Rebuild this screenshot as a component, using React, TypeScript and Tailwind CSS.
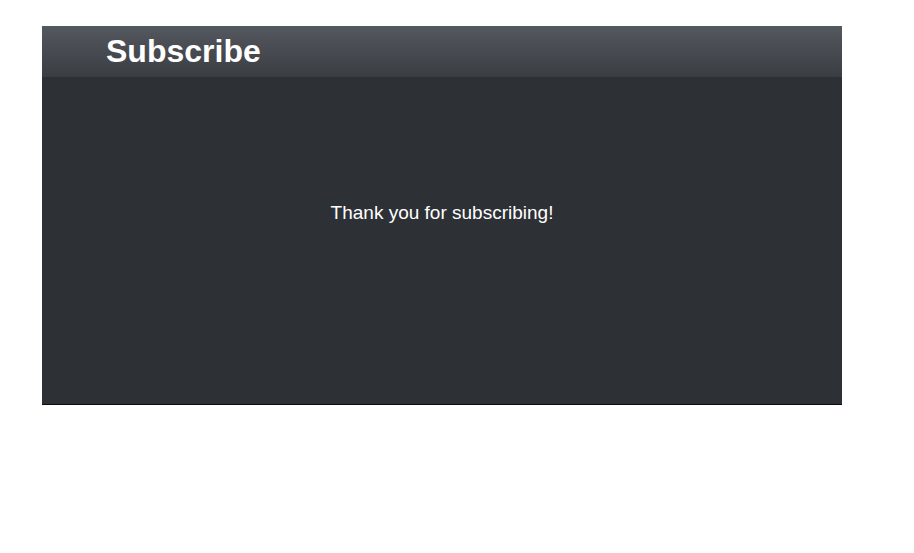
import React from "react";

const App = () => {
  return (
    <div className="min-h-screen bg-white pt-[26px] pl-[42px] font-['Liberation_Sans',Arial,sans-serif]">
      <section className="w-[800px] bg-[#2d3035] border-b border-[#0b0c0d]">
        <header className="h-[51px] flex items-center pl-16 pb-[2px] bg-gradient-to-b from-[#54585f] to-[#3a3d42]">
          <h1 className="text-[32px] font-bold text-white leading-none">Subscribe</h1>
        </header>
        <div className="h-[327px] pt-[124px] text-center">
          <p className="text-[19px] leading-[24px] text-white">Thank you for subscribing!</p>
        </div>
      </section>
    </div>
  );
};

export default App;
